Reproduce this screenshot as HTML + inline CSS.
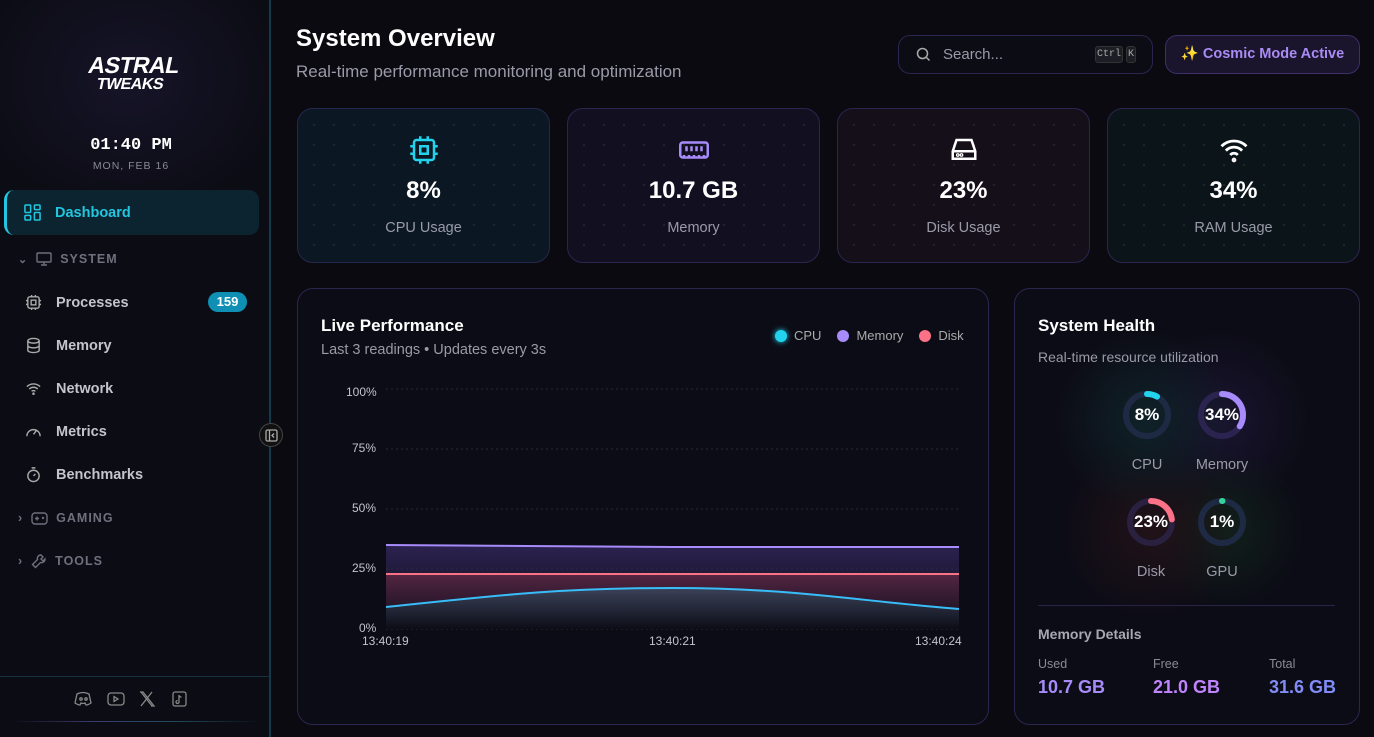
<!DOCTYPE html>
<html><head><meta charset="utf-8"><style>
*{margin:0;padding:0;box-sizing:border-box}
body{width:1374px;height:737px;overflow:hidden;background:#0a0a10;font-family:"Liberation Sans",sans-serif;color:#fff;position:relative}
.a{position:absolute}
.side{left:0;top:0;width:271px;height:737px;background:radial-gradient(ellipse 160px 140px at 130px 80px,#161428 0,#0c0c14 100%);background-color:#0c0c14;border-right:2px solid #123a4a}
.nav{left:24px;font-size:14.5px;color:#c4c4cc;font-weight:bold;display:flex;align-items:center;gap:14px}
.nav svg{width:17px;height:17px}
.sec{left:18px;font-size:12.5px;color:#6f6f7d;font-weight:bold;letter-spacing:1px;display:flex;align-items:center;gap:8px}
.card{border:1px solid #2c2550;border-radius:16px;background-color:#0e0e1a}
.stat{top:108px;width:253px;height:155px;background-image:radial-gradient(circle,rgba(255,255,255,.07) 1px,transparent 1.4px);background-size:20px 20px;background-position:6px 6px;text-align:center}
.stat .v{position:absolute;top:68px;width:100%;font-size:24px;font-weight:bold}
.stat .l{position:absolute;top:111px;width:100%;font-size:14.5px;color:#9a9aa8}
.stat svg{position:absolute;left:111px;top:26px;width:30px;height:30px}
.ax{font-size:12px;color:#c3c3cc}
.g{font-size:17px;font-weight:bold;text-align:center;width:60px}
.gl{font-size:14.5px;color:#9a9aa8;text-align:center;width:80px}
</style></head><body>
<div class="a side"></div>
<div class="a" style="left:80px;top:56px;width:104px;text-align:center;font-weight:900;line-height:19px;letter-spacing:-0.5px;transform:skewX(-12deg)"><div style="font-size:23px">ASTRAL</div><div style="font-size:16px">TWEAKS</div></div>
<div class="a" style="left:0;width:262px;top:136px;text-align:center;font-family:'Liberation Mono',monospace;font-weight:bold;font-size:17px">01:40 PM</div>
<div class="a" style="left:0;width:262px;top:160px;text-align:center;font-size:10.5px;color:#8a8a96;letter-spacing:1px">MON, FEB 16</div>
<div class="a" style="left:4px;top:190px;width:255px;height:45px;background:#0c2430;border-radius:10px;border-left:3px solid #22c6e0"></div>
<div class="a nav" style="top:204px;color:#22c6e0"><svg viewBox="0 0 18 18" fill="none" stroke="#22c6e0" stroke-width="1.6"><rect x="1" y="1" width="6" height="8" rx="1"/><rect x="11" y="1" width="6" height="5" rx="1"/><rect x="11" y="9" width="6" height="8" rx="1"/><rect x="1" y="12" width="6" height="5" rx="1"/></svg>Dashboard</div>
<div class="a sec" style="top:252px"><span style="font-size:11px">⌄</span><svg width="16" height="14" viewBox="0 0 16 14" fill="none" stroke="#6f6f7d" stroke-width="1.4"><rect x="1" y="1" width="14" height="9" rx="1"/><path d="M5 13h6M8 10v3"/></svg>SYSTEM</div>
<div class="a nav" style="top:294px;left:25px"><svg viewBox="0 0 18 18" fill="none" stroke="#aaa" stroke-width="1.5"><rect x="3" y="3" width="12" height="12" rx="2"/><rect x="6.5" y="6.5" width="5" height="5"/><path d="M7 1v2M11 1v2M7 15v2M11 15v2M1 7h2M1 11h2M15 7h2M15 11h2"/></svg>Processes</div>
<div class="a" style="left:208px;top:292px;width:39px;height:20px;border-radius:10px;background:#0e8fb3;font-size:13px;font-weight:bold;text-align:center;line-height:20px">159</div>
<div class="a nav" style="top:337px;left:25px"><svg viewBox="0 0 18 18" fill="none" stroke="#aaa" stroke-width="1.5"><ellipse cx="9" cy="4" rx="6" ry="2.5"/><path d="M3 4v10c0 1.4 2.7 2.5 6 2.5s6-1.1 6-2.5V4M3 9c0 1.4 2.7 2.5 6 2.5s6-1.1 6-2.5"/></svg>Memory</div>
<div class="a nav" style="top:380px;left:25px"><svg viewBox="0 0 18 18" fill="none" stroke="#aaa" stroke-width="1.5"><path d="M2 7a10 10 0 0 1 14 0M4.5 9.5a6.5 6.5 0 0 1 9 0M7 12a3 3 0 0 1 4 0"/><circle cx="9" cy="14.5" r=".6"/></svg>Network</div>
<div class="a nav" style="top:423px;left:25px"><svg viewBox="0 0 18 18" fill="none" stroke="#aaa" stroke-width="1.5"><path d="M2 14a7 7 0 1 1 14 0M9 12l3-4"/></svg>Metrics</div>
<div class="a nav" style="top:466px;left:25px"><svg viewBox="0 0 18 18" fill="none" stroke="#aaa" stroke-width="1.5"><circle cx="9" cy="10.5" r="6"/><path d="M7 2h4M9 10.5l2-2"/></svg>Benchmarks</div>
<div class="a sec" style="top:511px"><span>›</span><svg width="17" height="13" viewBox="0 0 17 13" fill="none" stroke="#6f6f7d" stroke-width="1.4"><rect x="1" y="1" width="15" height="11" rx="3"/><path d="M4 6.5h4M6 4.5v4"/><circle cx="12" cy="6" r=".5"/></svg>GAMING</div>
<div class="a sec" style="top:553px"><span>›</span><svg width="16" height="16" viewBox="0 0 16 16" fill="none" stroke="#6f6f7d" stroke-width="1.4"><path d="M10 2a3.5 3.5 0 0 0-3.5 4.5L1.5 11.5l3 3 5-5A3.5 3.5 0 0 0 14 6l-2 2-2-2 2-2z"/></svg>TOOLS</div>
<div class="a" style="left:259px;top:423px;width:24px;height:24px;border-radius:50%;border:1px solid #444;background:#111;"><svg style="position:absolute;left:5px;top:5px" width="13" height="13" viewBox="0 0 13 13" fill="none" stroke="#aaa" stroke-width="1.3"><rect x="1" y="1" width="11" height="11" rx="1.5"/><path d="M4.5 1v11M9 4.5L7 6.5l2 2"/></svg></div>
<div class="a" style="left:0;top:676px;width:270px;height:1px;background:#173040"></div>
<div class="a" style="left:10px;top:721px;width:250px;height:1px;background:linear-gradient(90deg,transparent,#3a3a70,#1d4a5a,transparent)"></div>
<svg class="a" style="left:74px;top:689px" width="120" height="20" viewBox="0 0 120 20" fill="none" stroke="#888" stroke-width="1.3"><path d="M3 5q6-3 12 0l2 9q-3 2-5 2l-1-2q-2 1-4 0l-1 2q-2 0-5-2z"/><circle cx="7" cy="10" r="1.2"/><circle cx="12" cy="10" r="1.2"/><rect x="34" y="4" width="16" height="12" rx="3"/><path d="M40 7.5v5l4-2.5z"/><path d="M67 3l11 14M78 3L67 17M66 3h3l11 14h-3"/><rect x="99" y="3" width="13" height="14" rx="2"/><path d="M105 6v7a1.5 1.5 0 1 1-1.5-1.5M105 6q0 2 2.5 2"/></svg>

<div class="a" style="left:296px;top:25px;font-size:24px;font-weight:bold">System Overview</div>
<div class="a" style="left:296px;top:62px;font-size:17px;color:#9a9aa8">Real-time performance monitoring and optimization</div>
<div class="a" style="left:898px;top:35px;width:255px;height:39px;border:1px solid #2c2550;border-radius:12px;background:#0c0c15"></div>
<svg class="a" style="left:916px;top:47px" width="15" height="15" viewBox="0 0 15 15" fill="none" stroke="#aaa" stroke-width="1.5"><circle cx="6.5" cy="6.5" r="5"/><path d="M10.5 10.5l3 3"/></svg>
<div class="a" style="left:943px;top:46px;font-size:15px;color:#9a9aa8">Search...</div>
<div class="a" style="left:1095px;top:46px;font-family:'Liberation Mono',monospace;font-size:10px;color:#aaa;display:flex;gap:3px"><span style="background:#1d1d25;border:1px solid #333;border-radius:3px;padding:2px 1px">Ctrl</span><span style="background:#1d1d25;border:1px solid #333;border-radius:3px;padding:2px 1px">K</span></div>
<div class="a" style="left:1165px;top:35px;width:195px;height:39px;border:1px solid #3d2f6a;border-radius:12px;background:#1a142c;font-size:14.5px;font-weight:bold;color:#a98bf5;line-height:37px;text-align:center"><span style="color:#f5c542">✨</span> Cosmic Mode Active</div>

<div class="a card stat" style="left:297px;background-color:#0b1722;border-color:#25284e"><svg viewBox="0 0 24 24" fill="none" stroke="#22d3ee" stroke-width="2"><rect x="4" y="4" width="16" height="16" rx="2"/><rect x="9" y="9" width="6" height="6"/><path d="M9 1v3M15 1v3M9 20v3M15 20v3M1 9h3M1 15h3M20 9h3M20 15h3"/></svg><div class="v">8%</div><div class="l">CPU Usage</div></div>
<div class="a card stat" style="left:567px;background-color:#120f20"><svg viewBox="0 0 24 24" fill="none" stroke="#a78bfa" stroke-width="2"><rect x="1" y="6" width="22" height="12" rx="2"/><path d="M6 9v4M10 9v4M14 9v4M18 9v4M4 18v-2M8 18v-2M12 18v-2M16 18v-2M20 18v-2"/></svg><div class="v">10.7 GB</div><div class="l">Memory</div></div>
<div class="a card stat" style="left:837px;background-color:#150f1a"><svg viewBox="0 0 24 24" fill="none" stroke="#fff" stroke-width="2"><path d="M3 13L6 4h12l3 9v6H3zM3 13h18"/><circle cx="7" cy="16" r=".5"/><circle cx="10" cy="16" r=".5"/></svg><div class="v">23%</div><div class="l">Disk Usage</div></div>
<div class="a card stat" style="left:1107px;background-color:#0b1519"><svg viewBox="0 0 24 24" fill="none" stroke="#fff" stroke-width="2.2"><path d="M2 9a14 14 0 0 1 20 0M5.5 12.5a9 9 0 0 1 13 0M9 16a4 4 0 0 1 6 0"/><circle cx="12" cy="20" r=".8"/></svg><div class="v">34%</div><div class="l">RAM Usage</div></div>

<div class="a card" style="left:297px;top:288px;width:692px;height:437px;background:#0c0c16"></div>
<div class="a" style="left:321px;top:316px;font-size:17px;font-weight:bold">Live Performance</div>
<div class="a" style="left:321px;top:342px;font-size:14.5px;color:#9a9aa8">Last 3 readings • Updates every 3s</div>
<div class="a" style="left:775px;top:328px;font-size:13px;color:#aaa;display:flex;align-items:center;gap:7px"><span style="width:12px;height:12px;border-radius:50%;background:#22d3ee;box-shadow:0 0 6px #22d3ee"></span>CPU<span style="width:12px;height:12px;border-radius:50%;background:#a78bfa;margin-left:9px"></span>Memory<span style="width:12px;height:12px;border-radius:50%;background:#fb7185;margin-left:9px"></span>Disk</div>
<div class="a ax" style="left:346px;top:385px">100%</div>
<div class="a ax" style="left:352px;top:441px">75%</div>
<div class="a ax" style="left:352px;top:501px">50%</div>
<div class="a ax" style="left:352px;top:561px">25%</div>
<div class="a ax" style="left:359px;top:621px">0%</div>
<div class="a ax" style="left:362px;top:634px">13:40:19</div>
<div class="a ax" style="left:649px;top:634px">13:40:21</div>
<div class="a ax" style="left:915px;top:634px">13:40:24</div>
<svg class="a" style="left:0;top:0" width="1374" height="737">
<defs><linearGradient id="m" x1="0" y1="0" x2="0" y2="1"><stop offset="0" stop-color="#3a2c6a" stop-opacity=".7"/><stop offset="1" stop-color="#1a1530" stop-opacity=".3"/></linearGradient>
<linearGradient id="d" x1="0" y1="0" x2="0" y2="1"><stop offset="0" stop-color="#7a2e48" stop-opacity=".6"/><stop offset="1" stop-color="#2a1520" stop-opacity=".2"/></linearGradient>
<linearGradient id="c" x1="0" y1="0" x2="0" y2="1"><stop offset="0" stop-color="#3a4a60" stop-opacity=".8"/><stop offset="1" stop-color="#0c0c16" stop-opacity=".9"/></linearGradient></defs>
<g stroke="#2a2a38" stroke-dasharray="2 3"><path d="M386 389H959M386 449H959M386 509H959M386 569H959M386 629H959"/></g>
<path d="M386 545L672 547L959 547V629H386Z" fill="url(#m)"/>
<path d="M386 574H959V629H386Z" fill="url(#d)"/>
<path d="M386 607C500 595 560 588 672 588C790 588 850 600 959 609V629H386Z" fill="url(#c)"/>
<path d="M386 545L672 547L959 547" stroke="#a78bfa" stroke-width="2" fill="none"/>
<path d="M386 574H959" stroke="#fb7185" stroke-width="2"/>
<path d="M386 607C500 595 560 588 672 588C790 588 850 600 959 609" stroke="#38bdf8" stroke-width="2" fill="none"/>
</svg>

<div class="a card" style="left:1014px;top:288px;width:346px;height:437px;background:radial-gradient(circle at 1145px 420px,#0f2228 0,transparent 90px),radial-gradient(circle at 1150px 530px,#211218 0,transparent 90px),radial-gradient(circle at 1225px 530px,#10201a 0,transparent 80px),radial-gradient(circle at 1220px 420px,#1a1430 0,transparent 90px),#0c0c16;background-attachment:fixed"></div>
<div class="a" style="left:1038px;top:316px;font-size:17px;font-weight:bold">System Health</div>
<div class="a" style="left:1038px;top:349px;font-size:14px;color:#9a9aa8">Real-time resource utilization</div>
<svg class="a" style="left:0;top:0" width="1374" height="737" fill="none" stroke-width="6" stroke-linecap="round">
<circle cx="1147" cy="415" r="21" stroke="#1e2a44"/><circle cx="1147" cy="415" r="21" stroke="#22d3ee" stroke-dasharray="10.5 200" transform="rotate(-90 1147 415)"/>
<circle cx="1222" cy="415" r="21" stroke="#2c2450"/><circle cx="1222" cy="415" r="21" stroke="#a78bfa" stroke-dasharray="44.8 200" transform="rotate(-90 1222 415)"/>
<circle cx="1151" cy="522" r="21" stroke="#2a2040"/><circle cx="1151" cy="522" r="21" stroke="#fb7185" stroke-dasharray="30.3 200" transform="rotate(-90 1151 522)"/>
<circle cx="1222" cy="522" r="21" stroke="#1e2a44"/><circle cx="1222" cy="522" r="21" stroke="#34d399" stroke-dasharray="0.5 200" transform="rotate(-90 1222 522)"/>
</svg>
<div class="a g" style="left:1117px;top:405px">8%</div>
<div class="a g" style="left:1192px;top:405px">34%</div>
<div class="a g" style="left:1121px;top:512px">23%</div>
<div class="a g" style="left:1192px;top:512px">1%</div>
<div class="a gl" style="left:1107px;top:457px">CPU</div>
<div class="a gl" style="left:1182px;top:457px">Memory</div>
<div class="a gl" style="left:1111px;top:564px">Disk</div>
<div class="a gl" style="left:1182px;top:564px">GPU</div>
<div class="a" style="left:1038px;top:605px;width:297px;height:1px;background:#2a2348"></div>
<div class="a" style="left:1038px;top:626px;font-size:14px;color:#a8a8b4;font-weight:bold">Memory Details</div>
<div class="a" style="left:1038px;top:657px;font-size:12.5px;color:#8a8a96">Used</div>
<div class="a" style="left:1153px;top:657px;font-size:12.5px;color:#8a8a96">Free</div>
<div class="a" style="left:1269px;top:657px;font-size:12.5px;color:#8a8a96">Total</div>
<div class="a" style="left:1038px;top:677px;font-size:18px;font-weight:bold;color:#a78bfa">10.7 GB</div>
<div class="a" style="left:1153px;top:677px;font-size:18px;font-weight:bold;color:#c084fc">21.0 GB</div>
<div class="a" style="left:1269px;top:677px;font-size:18px;font-weight:bold;color:#818cf8">31.6 GB</div>
</body></html>
